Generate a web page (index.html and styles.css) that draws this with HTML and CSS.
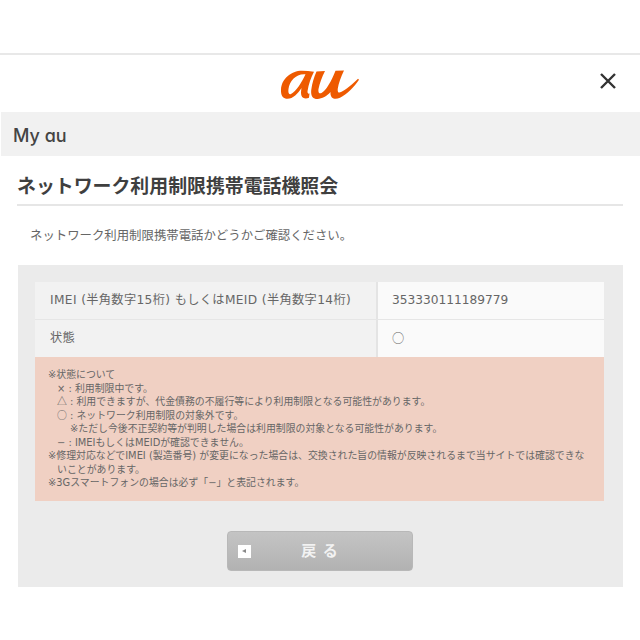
FILE: index.html
```html
<!DOCTYPE html>
<html lang="ja">
<head>
    <meta charset="UTF-8">
    <meta name="viewport" content="width=device-width, initial-scale=1.0">
    <title>ネットワーク利用制限携帯電話機照会</title>
    <link rel="stylesheet" href="styles.css">
</head>
<body>
    <header class="site-header">
        <svg class="logo" viewBox="0 0 78 30" aria-label="au">
            <path fill-rule="evenodd" d="M21 1.800C10 1.800 0.500 10 0 20.500C-0.300 26.500 2 29.800 6.500 29.800C12 29.800 17 24.500 20.500 19C20 22 19.700 24.500 20.500 26.800C21.500 29.700 25 30.200 28 28.800L28.500 24.500C26.800 25 26.300 24 26.600 21.800C27.500 15.500 30 8.500 33 2.800C29 2.200 25 1.800 21 1.800ZM24.500 5.300C21 13 15 23 10 25C7.800 25.800 7 23.800 7.500 20C8.500 12 15 4.500 24.500 5.300Z" fill="#ee5a00"/>
            <path d="M35.500 2.500L44 2C41 8 38.500 14.500 37.500 20C37 23.500 38.300 25 40.500 24C45 21.800 50.500 12 54.500 1.800L63 1.500C60 8 57.500 14.500 56.800 19.500C56.300 23 57.500 24.300 60 23C65 20.500 71.500 15.500 77 9.800L78 10.800C73 18 66 25.500 59 28.800C53.500 31.200 49 29.500 49.500 23C46 27 41 29.800 36.500 29.900C31.500 30 29.500 26.500 30.300 20.500C31.200 14 33 8 35.500 2.500Z" fill="#ee5a00"/>
        </svg>
        <svg class="close-icon" viewBox="0 0 16 16" aria-label="閉じる">
            <path d="M1 1L15 15M15 1L1 15" stroke="#333" stroke-width="2.400" fill="none"/>
        </svg>
    </header>

    <div class="brand-bar">My au</div>

    <main class="content">
        <h1 class="page-title">ネットワーク利用制限携帯電話機照会</h1>
        <p class="lead">ネットワーク利用制限携帯電話かどうかご確認ください。</p>

        <section class="result-panel">
            <div class="result-row">
                <div class="result-label">IMEI (半角数字15桁) もしくはMEID (半角数字14桁)</div>
                <div class="result-value">353330111189779</div>
            </div>
            <div class="result-row">
                <div class="result-label">状態</div>
                <div class="result-value"><span class="mark">○</span></div>
            </div>
            <div class="notes">
                <p>※状態について</p>
                <p class="indent-1">× : 利用制限中です。</p>
                <p class="indent-1"><span class="mark">△</span> : 利用できますが、代金債務の不履行等により利用制限となる可能性があります。</p>
                <p class="indent-1"><span class="mark">○</span> : ネットワーク利用制限の対象外です。</p>
                <p class="indent-2">※ただし今後不正契約等が判明した場合は利用制限の対象となる可能性があります。</p>
                <p class="indent-1">− : IMEIもしくはMEIDが確認できません。</p>
                <p class="hanging">※修理対応などでIMEI (製造番号) が変更になった場合は、交換された旨の情報が反映されるまで当サイトでは確認できないことがあります。</p>
                <p>※3Gスマートフォンの場合は必ず「−」と表記されます。</p>
            </div>
            <div class="button-row">
                <a class="back-button" href="#">
                    <span class="back-arrow"></span>
                    <span class="back-label">戻 る</span>
                </a>
            </div>
        </section>
    </main>
</body>
</html>
```

FILE: styles.css
```css
* {
    box-sizing: border-box;
}
body {
    margin: 0;
    padding-top: 53px;
    background-color: #fff;
    color: #555;
    font-family: "DejaVu Sans", "Noto Sans CJK JP", sans-serif;
}
.site-header {
    height: 59px;
    border-top: 2px solid #e8e8e8;
    display: flex;
    align-items: center;
    justify-content: center;
    position: relative;
}
.logo {
    width: 78px;
    height: 30px;
}
.close-icon {
    position: absolute;
    right: 24px;
    top: 18px;
    width: 16px;
    height: 16px;
}
.brand-bar {
    height: 44px;
    margin-left: 1px;
    padding-left: 12px;
    background-color: #f1f1f1;
    color: #444;
    font-family: "Inter", sans-serif;
    font-feature-settings: "cv11";
    font-size: 18px;
    font-weight: 500;
    line-height: 47px;
}
.content {
    padding: 0 17px;
}
.page-title {
    margin: 0;
    height: 50px;
    border-bottom: 2px solid #e6e6e6;
    padding-top: 15px;
    color: #3f3f3f;
    font-family: "Noto Sans CJK JP", sans-serif;
    font-size: 18.900px;
    font-weight: 700;
    line-height: 28px;
}
.lead {
    margin: 0;
    padding: 19px 0 0 13px;
    height: 59px;
    font-family: "Noto Sans CJK JP", sans-serif;
    font-size: 12.400px;
    line-height: 20px;
    color: #666;
}
.result-panel {
    margin-left: 1px;
    width: 605px;
    height: 322px;
    padding: 17px 19px 0 17px;
    background-color: #ebebeb;
}
.result-row {
    display: grid;
    grid-template-columns: 343px 1fr;
    height: 38px;
    border-bottom: 1px solid #e6e6e6;
    font-size: 12.200px;
    line-height: 36px;
}
.result-label {
    padding-left: 15px;
    background-color: #f2f2f2;
    border-right: 2px solid #e4e4e4;
    color: #666;
    letter-spacing: 0.370px;
}
.result-value {
    padding-left: 14px;
    background-color: #fafafa;
    color: #666;
}
.mark {
    font-family: "Noto Sans CJK JP", sans-serif;
}
.notes {
    height: 144px;
    margin-top: -1px;
    padding: 11px 12px 0 13px;
    background-color: #f0d0c3;
    color: #666;
    font-size: 9.900px;
    line-height: 13.500px;
}
.notes p {
    margin: 0;
}
.indent-1 {
    padding-left: 9px;
}
.indent-2 {
    padding-left: 22px;
}
.hanging {
    padding-left: 9px;
    text-indent: -9px;
}
.button-row {
    display: flex;
    justify-content: center;
    padding-top: 30px;
}
.back-button {
    width: 186px;
    height: 40px;
    display: flex;
    align-items: center;
    justify-content: center;
    position: relative;
    border-radius: 4px;
    background: linear-gradient(#c4c4c4, #b2b2b2);
    border: 1px solid #b8b8b8;
    color: #f2f2f2;
    font-family: "Noto Sans CJK JP", sans-serif;
    font-size: 15px;
    font-weight: 700;
    text-decoration: none;
}
.back-label {
    margin-top: -4px;
    word-spacing: 3px;
}
.back-arrow {
    position: absolute;
    left: 10px;
    top: 13px;
    width: 13px;
    height: 13px;
    background-color: #fff;
}
.back-arrow::after {
    content: "";
    position: absolute;
    left: 4px;
    top: 4px;
    border-style: solid;
    border-width: 2.500px 4px 2.500px 0;
    border-color: transparent #888 transparent transparent;
}
```
